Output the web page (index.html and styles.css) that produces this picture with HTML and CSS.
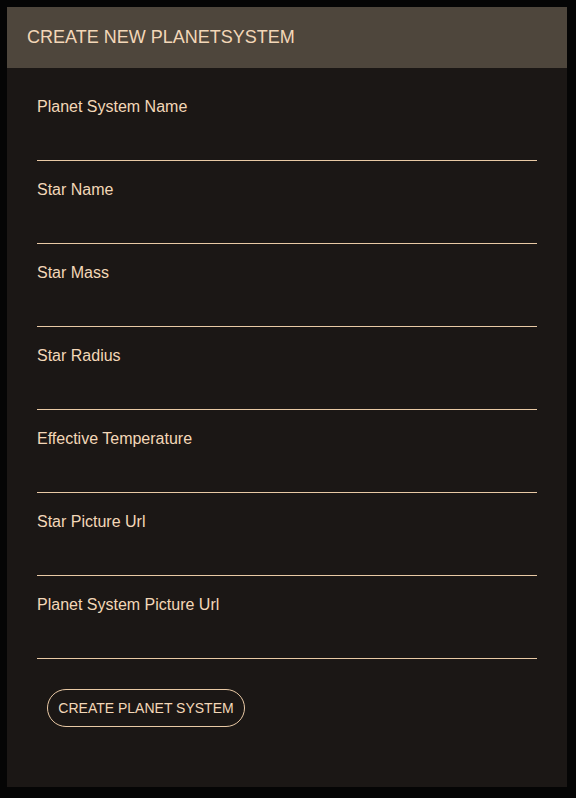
FILE: index.html
```html
<!DOCTYPE html>
<html>
<head>
<meta charset="utf-8">
<link rel="stylesheet" href="styles.css">
</head>
<body>
<div class="card">
  <div class="card-header">CREATE NEW PLANETSYSTEM</div>
  <form class="card-body">
    <div class="field"><label class="label">Planet System Name</label><input class="input" type="text"></div>
    <div class="field"><label class="label">Star Name</label><input class="input" type="text"></div>
    <div class="field"><label class="label">Star Mass</label><input class="input" type="text"></div>
    <div class="field"><label class="label">Star Radius</label><input class="input" type="text"></div>
    <div class="field"><label class="label">Effective Temperature</label><input class="input" type="text"></div>
    <div class="field"><label class="label">Star Picture Url</label><input class="input" type="text"></div>
    <div class="field"><label class="label">Planet System Picture Url</label><input class="input" type="text"></div>
    <button class="btn" type="button">CREATE PLANET SYSTEM</button>
  </form>
</div>
</body>
</html>
```
FILE: styles.css
```css
html, body { margin: 0; padding: 0; }
body {
  background: #050505;
  padding: 7px;
  font-family: "Liberation Sans", Arial, sans-serif;
  color: #f3d7b8;
  box-sizing: border-box;
  height: 798px;
}
.card {
  width: 560px;
  height: 780px;
  background: #1b1715;
  display: flex;
  flex-direction: column;
}
.card-header {
  height: 61px;
  background: #4e463c;
  display: flex;
  align-items: center;
  padding-left: 20px;
  font-size: 18px;
  color: #f3d7b8;
}
.card-body {
  padding: 30px 30px 0 30px;
  display: flex;
  flex-direction: column;
  margin: 0;
}
.field {
  display: flex;
  flex-direction: column;
  margin-bottom: 20px;
}
.label {
  font-size: 16px;
  line-height: 18px;
  color: #f3d7b8;
}
.input {
  height: 45px;
  box-sizing: border-box;
  border: none;
  border-bottom: 1px solid #e9c9a5;
  background: transparent;
  outline: none;
  padding: 0;
  color: #f3d7b8;
  font-family: inherit;
  font-size: 16px;
}
.btn {
  align-self: flex-start;
  margin-left: 10px;
  margin-top: 10px;
  width: 198px;
  height: 38px;
  border: 1px solid #e9c9a5;
  border-radius: 19px;
  background: transparent;
  color: #f3d7b8;
  font-family: "Liberation Sans", Arial, sans-serif;
  font-size: 14px;
  padding: 0;
}
```
